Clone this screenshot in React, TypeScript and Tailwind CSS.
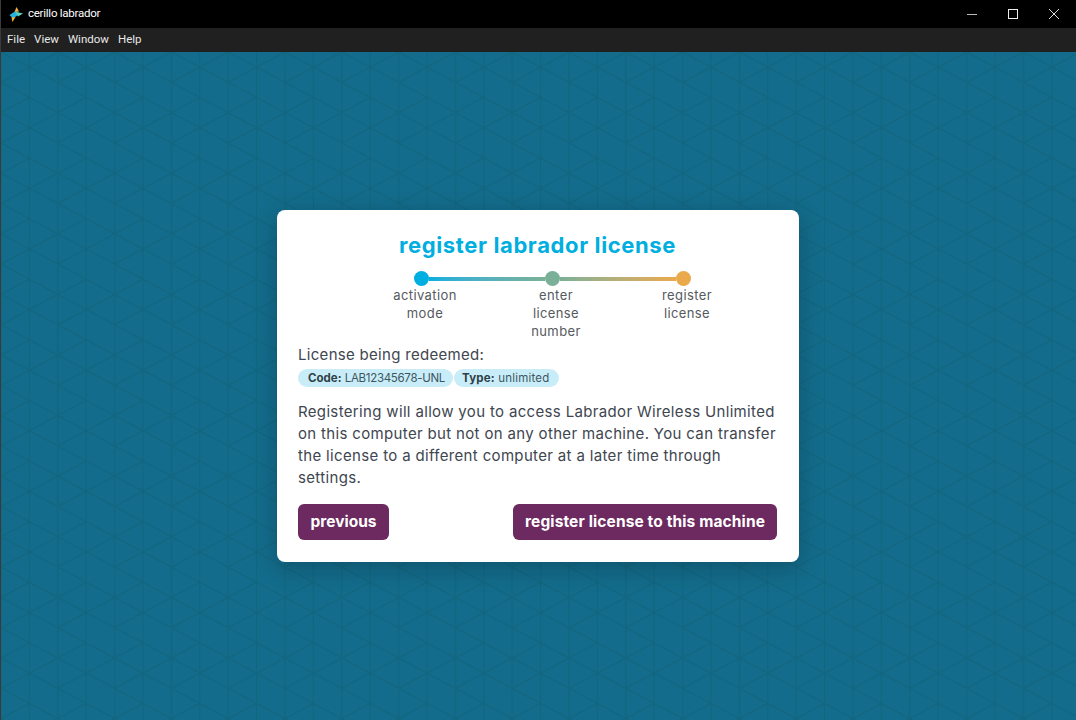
function Logo() {
  return (
    <svg width="14" height="15" viewBox="0 0 14 15" className="ml-[8px]">
      <polygon points="7.5,0 10,4.5 5.5,5" fill="#f2b441" />
      <polygon points="0.5,8 6,4.5 9,8 4,11.5" fill="#25b5dc" />
      <polygon points="6,4.5 14,6.5 9,9.5" fill="#5fd0c0" />
      <polygon points="2.5,10.5 6.5,10 3.5,15" fill="#f2b441" />
    </svg>
  )
}

function PatternBackground() {
  return (
    <svg className="absolute inset-0 w-full h-full" aria-hidden="true">
      <defs>
        <pattern id="tri" x="0" y="30.3" width="56.8" height="60.6" patternUnits="userSpaceOnUse">
          <g stroke="#11657f" strokeWidth="1.2" fill="none">
            <path d="M0 0V60.6M28.4 0V60.6M56.8 0V60.6" />
            <path d="M0 0L56.8 30.3M0 30.3L56.8 60.6" />
            <path d="M0 60.6L56.8 30.3M0 30.3L28.4 15.15" />
          </g>
        </pattern>
      </defs>
      <rect width="100%" height="100%" fill="url(#tri)" />
    </svg>
  )
}

const steps = ["activation mode", "enter license number", "register license"]

export default function App() {
  return (
    <div className="h-[720px] w-[1076px] flex flex-col overflow-hidden bg-[#136c8b] border-l border-[#3a3a3a] font-['Roboto',sans-serif]">
      {/* title bar */}
      <div className="h-7 bg-black flex items-center text-white text-[11.5px] shrink-0">
        <Logo />
        <span className="ml-[5px] flex-1 tracking-[-0.25px]">cerillo labrador</span>
        <div className="flex mr-[1.5px]">
          <button className="w-[41px] h-7 flex items-center justify-center">
            <span className="w-[10px] h-px bg-[#bbb]" />
          </button>
          <button className="w-[41px] h-7 flex items-center justify-center">
            <span className="w-[10px] h-[10px] border border-[#eee]" />
          </button>
          <button className="w-[41px] h-7 flex items-center justify-center">
            <svg width="10" height="10" viewBox="0 0 10 10" stroke="#ddd" strokeWidth="1">
              <path d="M0 0L10 10M10 0L0 10" />
            </svg>
          </button>
        </div>
      </div>

      {/* menu */}
      <div className="h-6 bg-[#202020] flex items-center gap-[9px] pl-[6px] text-[11.5px] text-[#e8e8e8] shrink-0">
        <span>File</span>
        <span>View</span>
        <span>Window</span>
        <span>Help</span>
      </div>

      <div className="relative flex-1 flex items-center justify-center font-['Inter',sans-serif]">
        <PatternBackground />
        <div className="relative ml-[-1px] w-[522px] h-[352px] bg-white rounded-lg shadow-[0_6px_24px_rgba(0,0,0,0.22)] pl-[21px] pr-[22px] pt-[21px] pb-[22px] text-[#40464f]">
          <h1 className="text-center text-[22px] leading-[28px] font-bold text-[#00aee0] tracking-[0.62px]">
            register labrador license
          </h1>

          {/* stepper */}
          <div className="ml-[116px] mt-[12px] w-[277px] flex items-center">
            <span className="w-[15px] h-[15px] rounded-full bg-[#00aee0] shrink-0" />
            <span className="flex-1 h-1 bg-gradient-to-r from-[#00aee0] to-[#7ab097]" />
            <span className="w-[15px] h-[15px] rounded-full bg-[#7ab097] shrink-0" />
            <span className="flex-1 h-1 bg-gradient-to-r from-[#7ab097] to-[#eaa94a]" />
            <span className="w-[15px] h-[15px] rounded-full bg-[#eaa94a] shrink-0" />
          </div>
          <div className="ml-[92px] flex gap-[61px] text-[13px] leading-[18px] tracking-[0.4px] text-center text-[#555a60]">
            {steps.map(s => (
              <div key={s} className="w-[70px]">{s}</div>
            ))}
          </div>

          <p className="mt-[4px] text-[15px] leading-[22px] tracking-[0.3px]">License being redeemed:</p>
          <div className="mt-[3px] flex gap-px text-[11.5px] leading-[18px]">
            <span className="pl-[10px] rounded-full bg-[#c9edf8] text-[#3d5560] w-[155px] whitespace-nowrap">
              <b className="font-bold text-[#2f3f47]">Code:</b> <span className="tracking-[-0.3px]">LAB12345678-UNL</span>
            </span>
            <span className="pl-[8px] rounded-full bg-[#c9edf8] text-[#3d5560] w-[105px] whitespace-nowrap tracking-[0.2px]">
              <b className="font-bold text-[#2f3f47]">Type:</b> unlimited
            </span>
          </div>

          <p className="mt-[14px] text-[15px] leading-[22px] tracking-[0.34px]">
            Registering will allow you to access Labrador Wireless Unlimited on this computer but not on any other machine. You can transfer the license to a different computer at a later time through settings.
          </p>

          <div className="mt-[15px] flex justify-between">
            <button className="h-9 w-[91px] rounded-md bg-[#6d2a60] text-white font-bold text-[15.5px]">previous</button>
            <button className="h-9 w-[264px] rounded-md bg-[#6d2a60] text-white font-bold text-[15.5px] tracking-[0.12px] whitespace-nowrap">register license to this machine</button>
          </div>
        </div>
      </div>
    </div>
  )
}
